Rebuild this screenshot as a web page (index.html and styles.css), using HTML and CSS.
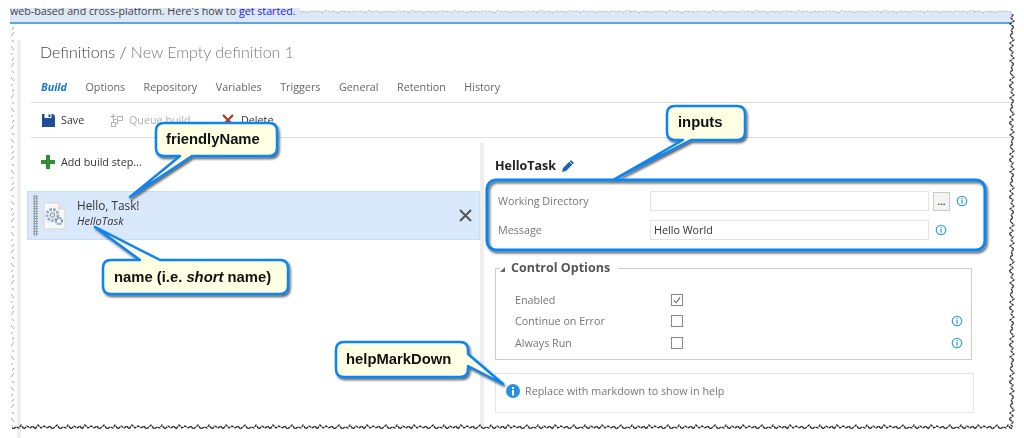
FILE: index.html

```html
<!DOCTYPE html>
<html lang="en">
<head>
  <meta charset="UTF-8" />
  <title>Definitions | New Empty definition 1</title>
  <link rel="stylesheet" href="styles.css">
</head>
<body>
<svg class="defs" width="0" height="0">
  <defs>
    <symbol id="info" viewBox="0 0 12 12">
      <circle cx="6" cy="6" r="4.7" fill="#fff" stroke="#3b9fe2" stroke-width="1.3"/>
      <rect x="5.4" y="5" width="1.3" height="3.8" fill="#3b9fe2"/>
      <rect x="5.4" y="3" width="1.3" height="1.3" fill="#3b9fe2"/>
    </symbol>
  </defs>
</svg>

<div class="notice">web-based and cross-platform. Here's how to <a href="#">get started.</a></div>

<div class="app">
  <h1>Definitions / <span>New Empty definition 1</span></h1>

  <nav class="tabs">
    <a class="active">Build</a>
    <a>Options</a>
    <a>Repository</a>
    <a>Variables</a>
    <a>Triggers</a>
    <a>General</a>
    <a>Retention</a>
    <a>History</a>
  </nav>

  <div class="toolbar">
    <span class="tool save">
      <svg width="13" height="13" viewBox="0 0 13 13"><path d="M0 0H2.5V4H9.5V0H11L13 2V13H0Z" fill="#1c4f94"/><rect x="6.5" y="0.5" width="2" height="2.5" fill="#1c4f94"/></svg>
      Save
    </span>
    <span class="tool queue">
      <svg width="13" height="13" viewBox="0 0 13 13" fill="none" stroke="#b5b5b5"><rect x="7.500" y="2.500" width="5" height="4"/><rect x="3.500" y="5.500" width="4" height="4" fill="#fff"/><rect x="1.500" y="8.500" width="4" height="4" fill="#fff"/><path d="M3 0V5M0.500 2.500H5.500" stroke="#8fbf7f"/></svg>
      Queue build
    </span>
    <span class="tool delete">
      <svg width="12" height="12" viewBox="0 0 12 12"><path d="M1 1L11 11M11 1L1 11" stroke="#a5381f" stroke-width="2.200"/></svg>
      Delete
    </span>
  </div>

  <div class="panes">
    <section class="steps">
      <div class="add-step">
        <svg width="14" height="14" viewBox="0 0 14 14"><path d="M5 0H9V5H14V9H9V14H5V9H0V5H5Z" fill="#2f8f2f"/></svg>
        Add build step...
      </div>
      <div class="task">
        <span class="grip"></span>
        <svg class="task-icon" width="23" height="28" viewBox="0 0 23 28">
          <path d="M1 1H16L22 7V27H1Z" fill="#f7f7f7" stroke="#d5d5d5"/>
          <path d="M16 1V7H22" fill="#e4e4e4" stroke="#d5d5d5"/>
          <circle cx="9.500" cy="13" r="5.500" fill="none" stroke="#8fb0cf" stroke-width="3" stroke-dasharray="2.500 1.200"/>
          <circle cx="9.500" cy="13" r="2.200" fill="#dfe9f2" stroke="#7c8f9f"/>
          <circle cx="16" cy="19" r="3" fill="none" stroke="#6f94b8" stroke-width="2" stroke-dasharray="1.600 .8"/>
        </svg>
        <div class="task-names">
          <div class="friendly">Hello, Task!</div>
          <div class="short">HelloTask</div>
        </div>
        <svg class="task-remove" width="13" height="13" viewBox="0 0 13 13"><path d="M1 1L12 12M12 1L1 12" stroke="#555" stroke-width="2"/></svg>
      </div>
    </section>

    <section class="detail">
      <h2>HelloTask
        <svg width="14" height="14" viewBox="0 0 14 14"><path d="M10 1L13 4L5 12L1 13L2 9Z" fill="#1f63b5"/><path d="M8.500 2.500L11.500 5.500" stroke="#fff"/></svg>
      </h2>

      <div class="inputs">
        <label>Working Directory</label>
        <input type="text" value="" readonly>
        <button>...</button>
        <svg class="ico wd-info"><use href="#info"/></svg>
        <label>Message</label>
        <input type="text" value="Hello World" readonly>
        <svg class="ico msg-info"><use href="#info"/></svg>
      </div>

      <fieldset class="control">
        <legend><i></i>Control Options</legend>
        <div class="opt">
          <span>Enabled</span>
          <span class="check"><svg width="11" height="11" viewBox="0 0 11 11" fill="none"><path d="M2 5.500L4.500 8L9 2" stroke="#666" stroke-width="1.200"/></svg></span>
        </div>
        <div class="opt">
          <span>Continue on Error</span>
          <span class="check"></span>
          <svg class="ico"><use href="#info"/></svg>
        </div>
        <div class="opt">
          <span>Always Run</span>
          <span class="check"></span>
          <svg class="ico"><use href="#info"/></svg>
        </div>
      </fieldset>

      <div class="help">
        <svg width="14" height="14" viewBox="0 0 14 14"><circle cx="7" cy="7" r="7" fill="#2a8fdc"/><rect x="6" y="6" width="2" height="5.500" fill="#fff"/><rect x="6" y="3" width="2" height="2" fill="#fff"/></svg>
        Replace with markdown to show in help
      </div>
    </section>
  </div>
</div>

<!-- torn screenshot edges -->
<svg class="torn" width="1024" height="438" viewBox="0 0 1024 438">
  <defs>
    <pattern id="tornBottom" width="47" height="8" patternUnits="userSpaceOnUse" y="423">
      <path d="M0 5L3 3L5 6L8 4L10 2L13 6L16 4L19 5L21 2L24 6L27 3L30 5L33 3L35 6L38 2L41 5L44 3L47 5" fill="none" stroke="#222" stroke-width="1.300" stroke-dasharray="3 .8"/>
    </pattern>
    <pattern id="tornRight" width="8" height="37" patternUnits="userSpaceOnUse" x="1008">
      <path d="M3 0L6 3L2 6L5 9L1 12L5 15L3 18L6 21L2 24L6 27L3 30L5 33L2 35L3 37" fill="none" stroke="#333" stroke-width="1.300" stroke-dasharray="3 .8"/>
    </pattern>
    <pattern id="tornLeft" width="8" height="31" patternUnits="userSpaceOnUse" x="8">
      <path d="M6 1L3 5M4 9L6 11M3 15L6 19M5 22L3 24M6 27L4 30" fill="none" stroke="#a5a5a5" stroke-width=".9"/>
    </pattern>
    <pattern id="tornTop" width="43" height="6" patternUnits="userSpaceOnUse" y="8">
      <path d="M0 4L4 3L7 5L11 2L14 4L18 3L22 5L25 2L29 4L33 3L37 5L40 3L43 4" fill="none" stroke="#b9b9b9" stroke-width=".9" stroke-dasharray="3 1.500"/>
    </pattern>
  </defs>
  <rect x="0" y="0" width="300" height="8" fill="#fff"/>
  <rect x="300" y="0" width="724" height="11" fill="#fff"/>
  <rect x="300" y="8" width="712" height="6" fill="url(#tornTop)"/>
  <rect x="8" y="24" width="8" height="402" fill="url(#tornLeft)"/>
  <rect x="1008" y="14" width="8" height="413" fill="url(#tornRight)"/>
  <rect x="12" y="423" width="1000" height="8" fill="url(#tornBottom)"/>
</svg>

<!-- callouts -->
<svg class="callouts" width="1024" height="438" viewBox="0 0 1024 438">
  <defs>
    <filter id="shadow" x="-10%" y="-20%" width="125%" height="150%">
      <feDropShadow dx="1.500" dy="2" stdDeviation="1.300" flood-color="#000" flood-opacity=".6"/>
    </filter>
  </defs>
  <g class="bubble" filter="url(#shadow)">
    <path d="M164 123H269Q277 123 277 131V148Q277 156 269 156H192L130 197L180 156H164Q156 156 156 148V131Q156 123 164 123Z"/>
    <path d="M111 260H140L95 227L160 260H280Q288 260 288 268V286Q288 294 280 294H111Q103 294 103 286V268Q103 260 111 260Z"/>
    <path d="M675 106H737Q745 106 745 114V132Q745 140 737 140H691L613 180L683 140H675Q667 140 667 132V114Q667 106 675 106Z"/>
    <path d="M344 342H460Q468 342 468 350V354L503 384L468 366V369Q468 377 460 377H344Q336 377 336 369V350Q336 342 344 342Z"/>
    <rect class="frame" x="487" y="180" width="498" height="70" rx="9"/>
  </g>
  <text x="166" y="144">friendlyName</text>
  <text x="114" y="282">name (i.e. <tspan font-style="italic">short</tspan> name)</text>
  <text x="678" y="127">inputs</text>
  <text x="346" y="364">helpMarkDown</text>
</svg>
</body>
</html>
```

FILE: styles.css

```css
html, body {
  margin: 0;
  padding: 0;
}

body {
  position: relative;
  width: 1024px;
  height: 438px;
  overflow: hidden;
  background: #fff;
  color: #333;
  font-family: "Open Sans", "Noto Sans", sans-serif;
  font-size: 10.750px;
  filter: blur(0.35px);
}

.defs {
  position: absolute;
}

.notice {
  box-sizing: border-box;
  height: 24px;
  margin: 0 12px 0 10px;
  padding-top: 4px;
  background: #dde8f6;
  border-bottom: 2px solid #5ba5e0;
  font-size: 10.700px;
  line-height: 15px;
  overflow: hidden;
  color: #444;
}

.notice a {
  color: #2222dd;
  text-decoration: none;
}

.app {
  box-sizing: border-box;
  width: 995px;
  height: 403px;
  margin-left: 17px;
  border-left: 4px solid #eee;
}

h1 {
  margin: 16px 0 0 19px;
  font-family: Lato, "Open Sans", sans-serif;
  font-size: 16px;
  font-weight: 300;
  line-height: 24px;
  color: #444;
}

h1 span {
  color: #7a7a7a;
}

.tabs {
  display: flex;
  gap: 18.500px;
  margin: 15px 0 0 10px;
  padding: 0 10px 7px 10px;
  border-bottom: 1px solid #ddd;
  line-height: 16px;
  color: #666;
}

.tabs .active {
  color: #1478d2;
  font-weight: 700;
  font-style: italic;
}

.toolbar {
  display: flex;
  align-items: center;
  height: 34px;
  margin-left: 10px;
  padding-left: 11px;
  border-bottom: 1px solid #ddd;
}

.tool {
  display: flex;
  align-items: center;
  gap: 6px;
}

.save {
  width: 68px;
}

.queue {
  width: 112px;
  color: #b0b0b0;
}

.delete {
  gap: 7px;
}

.panes {
  display: flex;
  margin-top: 5px;
  height: 283px;
}

.steps {
  width: 459px;
  flex: none;
}

.add-step {
  display: flex;
  align-items: center;
  gap: 6px;
  height: 16px;
  margin: 11px 0 0 20px;
}

.task {
  box-sizing: border-box;
  display: flex;
  align-items: center;
  height: 49px;
  margin: 21px 0 0 6px;
  padding: 0 7px 0 5px;
  background: #d9e8fa;
  border: 1px solid #c6def7;
}

.grip {
  width: 5px;
  height: 41px;
  background: radial-gradient(circle, #8b8f94 0.9px, transparent 1.100px) 0 0 / 2.500px 2.500px;
}

.task-icon {
  margin-left: 5px;
}

.task-names {
  flex: 1;
  margin: -6px 0 0 11px;
}

.friendly {
  font-size: 11.800px;
  line-height: 16px;
  color: #333;
}

.short {
  font-size: 11px;
  font-style: italic;
  line-height: 16px;
}

.detail {
  flex: 1;
  border-left: 4px solid #eee;
  padding: 14px 0 0 11px;
}

h2 {
  display: flex;
  align-items: center;
  gap: 5px;
  margin: 0;
  font-size: 12.500px;
  font-weight: 700;
  line-height: 18px;
  color: #222;
}

.inputs {
  display: grid;
  grid-template-columns: 152px 279px 21px 24px;
  grid-auto-rows: 20px;
  row-gap: 9px;
  align-items: center;
  margin: 16px 0 0 3px;
}

.inputs label {
  color: #777;
}

.inputs input {
  box-sizing: border-box;
  width: 279px;
  height: 20px;
  padding: 0 3px;
  border: 1px solid #e3e3e3;
  font: inherit;
  color: #333;
}

.inputs button {
  box-sizing: border-box;
  width: 17px;
  height: 19px;
  margin-left: 4px;
  padding: 0;
  background: #f3f3f3;
  border: 1px solid #ccc;
  font: inherit;
  font-size: 10px;
}

.ico {
  width: 12px;
  height: 12px;
}

.wd-info {
  justify-self: center;
}

.msg-info {
  grid-column: 3;
  justify-self: end;
  margin-right: 3px;
}

.control {
  box-sizing: border-box;
  width: 477px;
  height: 100px;
  margin: 20px 0 0 0;
  padding: 13px 0 0 19px;
  border: 1px solid #ccc;
}

.control legend {
  display: flex;
  align-items: center;
  gap: 6px;
  margin-left: -15px;
  padding: 0 8px 0 0;
  font-size: 12.500px;
  font-weight: 700;
  line-height: 16px;
  color: #555;
}

.control legend i {
  width: 0;
  height: 0;
  margin-top: 3px;
  border-left: 5px solid transparent;
  border-bottom: 5px solid #666;
}

.opt {
  display: flex;
  align-items: center;
  height: 21.500px;
  color: #777;
}

.opt span:first-child {
  width: 156px;
}

.check {
  box-sizing: border-box;
  display: flex;
  width: 12px;
  height: 12px;
  border: 1px solid #888;
}

.opt .ico {
  margin-left: 268px;
}

.help {
  box-sizing: border-box;
  display: flex;
  align-items: center;
  gap: 5px;
  width: 479px;
  height: 40px;
  margin-top: 13px;
  padding: 0 0 4px 10px;
  border: 1px solid #e5e5e5;
  color: #777;
}

.torn, .callouts {
  position: absolute;
  top: 0;
  left: 0;
  pointer-events: none;
}

.bubble path {
  fill: #ffffe4;
  stroke: #0a84ef;
  stroke-width: 2.500;
  stroke-linejoin: round;
}

.bubble .frame {
  fill: none;
  stroke: #0a84ef;
  stroke-width: 3;
}

.callouts text {
  font-family: "Liberation Sans", Arial, sans-serif;
  font-size: 14.800px;
  font-weight: 700;
  fill: #111;
}
```
